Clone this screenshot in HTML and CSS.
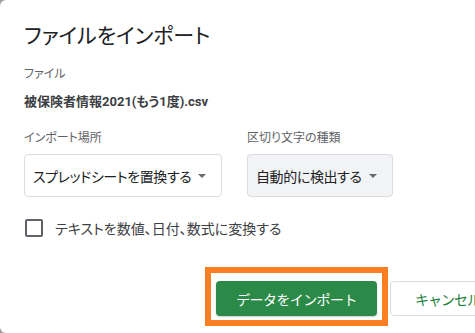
FILE: index.html
```html
<!DOCTYPE html>
<html lang="ja">
<head>
    <meta charset="UTF-8">
    <meta name="viewport" content="width=device-width, initial-scale=1.0">
    <title>ファイルをインポート</title>
    <link rel="stylesheet" href="styles.css">
</head>
<body>
    <div class="dialog">
        <h1 class="title">ファイルをインポート</h1>

        <div class="label">ファイル</div>
        <div class="filename">被保険者情報2021(もう1度).csv</div>

        <div class="fields">
            <div class="field">
                <div class="label">インポート場所</div>
                <div class="select select-location">
                    <span>スプレッドシートを置換する</span>
                    <svg class="caret" width="8" height="4" viewBox="0 0 8 4"><polygon points="0,0 8,0 4,4" fill="#6b6b6b"/></svg>
                </div>
            </div>
            <div class="field">
                <div class="label">区切り文字の種類</div>
                <div class="select select-separator">
                    <span>自動的に検出する</span>
                    <svg class="caret" width="8" height="4" viewBox="0 0 8 4"><polygon points="0,0 8,0 4,4" fill="#6b6b6b"/></svg>
                </div>
            </div>
        </div>

        <label class="check-row">
            <span class="checkbox"></span>
            <span>テキストを数値、日付、数式に変換する</span>
        </label>

        <div class="actions">
            <div class="highlight">
                <button class="btn btn-primary">データをインポート</button>
            </div>
            <button class="btn btn-cancel">キャンセル</button>
        </div>
    </div>
</body>
</html>
```

FILE: styles.css
```css
html, body {
    margin: 0;
    height: 100%;
    overflow: hidden;
}

body {
    background-color: #9e9e9e;
    font-family: Roboto, "Noto Sans CJK JP", sans-serif;
    font-feature-settings: "palt" 1;
    color: #202124;
}

.dialog {
    height: 100%;
    background-color: #fff;
    border-radius: 6px 0 0 6px;
    padding: 24px 0 0 24px;
    box-sizing: border-box;
}

.title {
    margin: 0;
    font-size: 21px;
    line-height: 24px;
    font-weight: 400;
    color: #202124;
}

.label {
    margin-top: 18px;
    font-size: 12px;
    line-height: 16px;
    color: #5f6368;
}

.filename {
    margin-top: 11px;
    font-size: 13px;
    line-height: 18px;
    font-weight: 700;
    color: #3c4043;
}

.fields {
    display: flex;
    gap: 25px;
    margin-top: 1px;
}

.field .label {
    margin-bottom: 8px;
}

.select {
    display: flex;
    align-items: center;
    justify-content: space-between;
    height: 43px;
    box-sizing: border-box;
    padding: 0 15px 0 8px;
    border: 1px solid #dadce0;
    border-radius: 4px;
    font-size: 14px;
    letter-spacing: -0.4px;
    color: #202124;
}

.select-location {
    width: 198px;
    background-color: #fff;
}

.select-separator {
    width: 146px;
    background-color: #f1f3f4;
}

.caret {
    flex-shrink: 0;
}

.check-row {
    display: flex;
    align-items: center;
    gap: 12px;
    margin-top: 21px;
    margin-left: 1px;
    font-size: 14px;
    color: #3c4043;
}

.checkbox {
    width: 18px;
    height: 18px;
    box-sizing: border-box;
    border: 2px solid #5f6368;
    border-radius: 2px;
}

.actions {
    display: flex;
    align-items: center;
    margin-top: 29px;
    padding-left: 181px;
}

.highlight {
    border: 6px solid #fa7f22;
    padding: 8px 5px 4px 5px;
}

.btn {
    height: 35px;
    box-sizing: border-box;
    border-radius: 4px;
    font-family: inherit;
    font-size: 14px;
    letter-spacing: -0.6px;
    cursor: pointer;
    white-space: nowrap;
    flex-shrink: 0;
}

.btn-primary {
    display: block;
    width: 161px;
    border: none;
    background-color: #2b8a47;
    color: #fff;
    box-shadow: 0 1px 2px rgba(0, 0, 0, 0.2);
}

.btn-cancel {
    margin-left: 2px;
    margin-top: 4px;
    padding: 0 22px 0 24px;
    border: 1px solid #dadce0;
    background-color: #fff;
    color: #188038;
    letter-spacing: -1px;
}
```
